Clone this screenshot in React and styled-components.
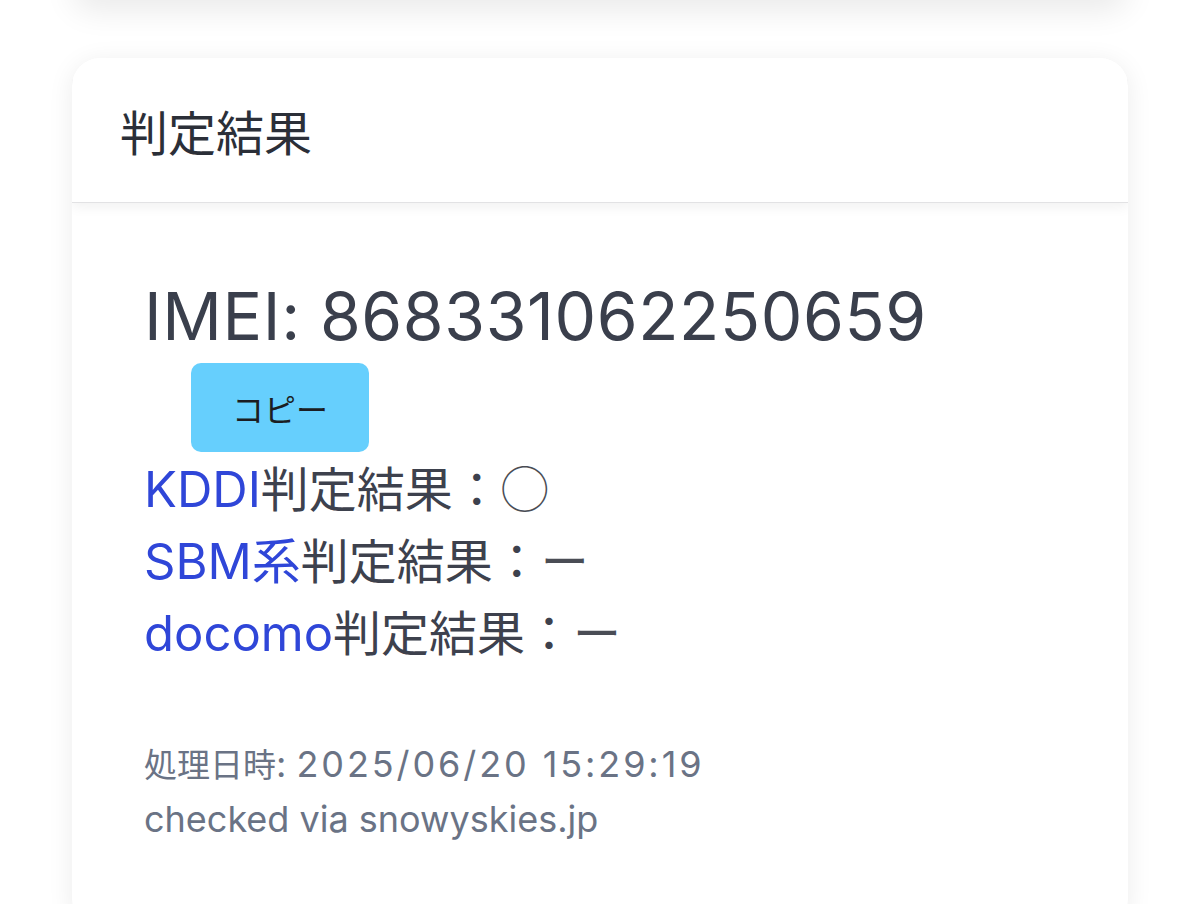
import React from "react";
import styled, { createGlobalStyle } from "styled-components";

const GlobalStyle = createGlobalStyle`
  html, body {
    margin: 0;
    padding: 0;
    background: #ffffff;
  }
  body {
    font-family: Inter, "Noto Sans CJK JP", sans-serif;
    overflow: hidden;
  }
`;

const Page = styled.div`
  padding: 0 72px 40px;
  box-sizing: border-box;
  width: 1200px;
`;

const PrevCard = styled.div`
  height: 40px;
  margin-top: -40px;
  border-radius: 28px;
  background: #ffffff;
  box-shadow: 0 10px 32px rgba(0, 0, 0, 0.09);
`;

const Card = styled.section`
  margin-top: 58px;
  background: #ffffff;
  border-radius: 28px;
  box-shadow: 0 4px 26px rgba(0, 0, 0, 0.08);
  overflow: hidden;
`;

const CardHeader = styled.header`
  position: relative;
  z-index: 1;
  height: 144px;
  display: flex;
  align-items: center;
  padding: 0 48px;
  background: #ffffff;
  box-shadow: 0 1px 0 #e2e2e4, 0 5px 12px rgba(0, 0, 0, 0.06);
`;

const Title = styled.h2`
  margin: 0;
  font-family: "Noto Sans CJK JP", sans-serif;
  font-weight: 400;
  font-size: 48px;
  color: #2b2f38;
`;

const CardBody = styled.div`
  padding: 76px 72px 80px;
  display: flex;
  flex-direction: column;
  align-items: flex-start;
`;

const Imei = styled.div`
  font-family: Inter, "Noto Sans CJK JP", sans-serif;
  font-size: 66px;
  line-height: 76px;
  font-weight: 400;
  letter-spacing: 0.6px;
  color: #3a3f4c;
`;

const CopyButton = styled.button`
  margin: 9px 0 2px 47px;
  height: 89px;
  width: 178px;
  border: none;
  border-radius: 10px;
  background: #66cffd;
  color: #1b1d22;
  font-family: "Noto Sans CJK JP", sans-serif;
  font-size: 32px;
  font-weight: 400;
  padding: 0;
  cursor: pointer;
`;

const Results = styled.div`
  display: flex;
  flex-direction: column;
`;

const ResultLine = styled.div`
  font-family: Inter, "Noto Sans CJK JP", sans-serif;
  font-size: 48px;
  line-height: 72px;
  height: 72px;
  color: #3d414d;
  white-space: nowrap;
`;

const Carrier = styled.span`
  color: #2f46d8;
  font-size: 49px;
`;

const Mark = styled.span`
  font-family: "Noto Sans CJK JP", sans-serif;
  line-height: 1;
  color: #4a4d55;
`;

const Meta = styled.div`
  margin-top: 67px;
  font-family: Inter, "Noto Sans CJK JP", sans-serif;
  font-size: 36px;
  line-height: 55px;
  color: #6a7385;
`;

const MetaLine = styled.div`
  height: 55px;
`;

const MetaLabel = styled.span`
  font-family: "Noto Sans CJK JP", sans-serif;
  font-size: 33px;
  line-height: 1;
`;

const MetaValue = styled.span`
  letter-spacing: 2.9px;
`;

const results = [
  { carrier: "KDDI", value: "◯" },
  { carrier: "SBM系", value: "ー" },
  { carrier: "docomo", value: "ー" },
];

export default function App() {
  return (
    <>
      <GlobalStyle />
      <Page>
        <PrevCard />
        <Card>
          <CardHeader>
            <Title>判定結果</Title>
          </CardHeader>
          <CardBody>
            <Imei>IMEI: 868331062250659</Imei>
            <CopyButton>コピー</CopyButton>
            <Results>
              {results.map((r) => (
                <ResultLine key={r.carrier}>
                  <Carrier>{r.carrier}</Carrier>判定結果：<Mark>{r.value}</Mark>
                </ResultLine>
              ))}
            </Results>
            <Meta>
              <MetaLine>
                <MetaLabel>処理日時</MetaLabel>: <MetaValue>2025/06/20 15:29:19</MetaValue>
              </MetaLine>
              <MetaLine>checked via snowyskies.jp</MetaLine>
            </Meta>
          </CardBody>
        </Card>
      </Page>
    </>
  );
}
